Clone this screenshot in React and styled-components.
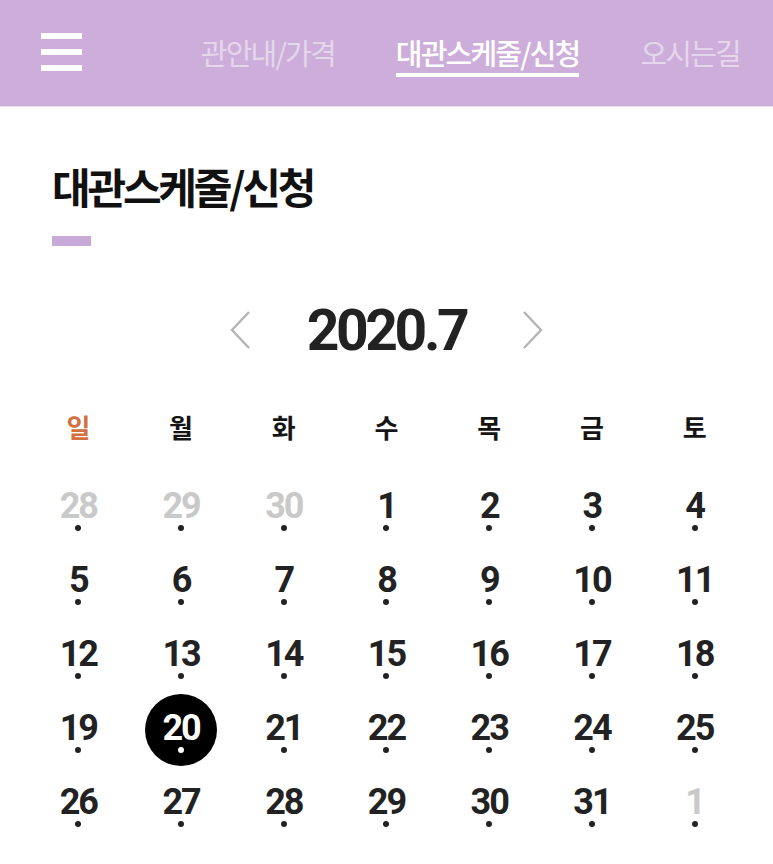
import styled, { createGlobalStyle } from "styled-components";

const GlobalStyle = createGlobalStyle`
  body {
    margin: 0;
    background: #ffffff;
    font-family: "Noto Sans CJK KR", "Noto Sans", sans-serif;
  }
`;

const weekdays = ["일", "월", "화", "수", "목", "금", "토"];

const weeks = [
  [28, 29, 30, 1, 2, 3, 4],
  [5, 6, 7, 8, 9, 10, 11],
  [12, 13, 14, 15, 16, 17, 18],
  [19, 20, 21, 22, 23, 24, 25],
  [26, 27, 28, 29, 30, 31, 1],
];

function isOtherMonth(week, day) {
  return (week === 0 && day > 20) || (week === 4 && day < 10);
}

function App() {
  return (
    <Page>
      <GlobalStyle />
      <Header>
        <Hamburger aria-label="menu">
          <Bar />
          <Bar />
          <Bar />
        </Hamburger>
        <Nav>
          <NavItem>관안내/가격</NavItem>
          <NavItem $active>대관스케줄/신청</NavItem>
          <NavItem>오시는길</NavItem>
        </Nav>
      </Header>

      <Content>
        <Title>대관스케줄/신청</Title>
        <TitleMark />

        <MonthBar>
          <Arrow aria-label="previous">
            <svg width="22" height="40" viewBox="0 0 22 40">
              <polyline points="20,2 3,20 20,38" fill="none" stroke="#b4b4b4" strokeWidth="2.4" />
            </svg>
          </Arrow>
          <MonthLabel>2020.7</MonthLabel>
          <Arrow aria-label="next">
            <svg width="22" height="40" viewBox="0 0 22 40">
              <polyline points="2,2 19,20 2,38" fill="none" stroke="#b4b4b4" strokeWidth="2.4" />
            </svg>
          </Arrow>
        </MonthBar>

        <Grid>
          {weekdays.map((w, i) => (
            <Weekday key={w} $sunday={i === 0}>
              {w}
            </Weekday>
          ))}
          {weeks.map((week, wi) =>
            week.map((day, di) => {
              const selected = wi === 3 && day === 20;
              return (
                <Cell key={`${wi}-${di}`}>
                  <Day $muted={isOtherMonth(wi, day)} $selected={selected}>
                    <DayNum>{day}</DayNum>
                    <Dot $selected={selected} />
                  </Day>
                </Cell>
              );
            })
          )}
        </Grid>
      </Content>
    </Page>
  );
}

const Page = styled.div`
  width: 773px;
  min-height: 864px;
  background: #ffffff;
`;

const Header = styled.header`
  height: 107px;
  background: #cdaeda;
  display: flex;
  align-items: center;
  padding: 0 33px 0 41px;
  box-sizing: border-box;
  border-bottom: 1px solid #e6dcea;
`;

const Hamburger = styled.div`
  width: 41px;
  display: flex;
  flex-direction: column;
  gap: 10px;
  margin-top: -2px;
`;

const Bar = styled.span`
  display: block;
  height: 6px;
  background: #ffffff;
`;

const Nav = styled.nav`
  flex: 1;
  display: flex;
  justify-content: flex-end;
  gap: 61px;
`;

const NavItem = styled.span`
  position: relative;
  font-size: 29px;
  letter-spacing: -1.8px;
  line-height: 1;
  padding-bottom: 2px;
  color: ${(p) => (p.$active ? "#ffffff" : "rgba(255, 255, 255, 0.5)")};
  font-weight: ${(p) => (p.$active ? 500 : 400)};

  &::after {
    content: "";
    display: ${(p) => (p.$active ? "block" : "none")};
    position: absolute;
    left: 0;
    right: 0;
    bottom: -8px;
    height: 4px;
    background: #ffffff;
  }
`;

const Content = styled.main`
  padding: 56px 27px 0;
`;

const Title = styled.h1`
  margin: 0 0 0 25px;
  font-size: 42px;
  font-weight: 700;
  letter-spacing: -3.2px;
  color: #111111;
  line-height: 46px;
`;

const TitleMark = styled.div`
  width: 39px;
  height: 10px;
  background: #c8a9d8;
  margin: 27px 0 0 25px;
`;

const MonthBar = styled.div`
  display: flex;
  justify-content: center;
  align-items: center;
  gap: 56px;
  margin-top: 54px;
`;

const Arrow = styled.button`
  border: 0;
  background: none;
  padding: 0;
  display: flex;
  cursor: pointer;
`;

const MonthLabel = styled.div`
  font-family: "Roboto", sans-serif;
  font-weight: 700;
  font-size: 57px;
  letter-spacing: -3.4px;
  color: #222222;
  line-height: 1;
  margin-top: 2px;
`;

const Grid = styled.div`
  display: grid;
  grid-template-columns: repeat(7, 1fr);
  grid-template-rows: 70px;
  grid-auto-rows: 74px;
  margin-top: 42px;
`;

const Weekday = styled.div`
  display: flex;
  justify-content: center;
  align-items: center;
  padding-bottom: 19px;
  font-size: 26px;
  font-weight: 700;
  color: ${(p) => (p.$sunday ? "#d4703f" : "#151515")};
`;

const Cell = styled.div`
  display: flex;
  justify-content: center;
  align-items: center;
`;

const Day = styled.div`
  width: 72px;
  height: 72px;
  border-radius: 50%;
  display: flex;
  flex-direction: column;
  align-items: center;
  justify-content: center;
  background: ${(p) => (p.$selected ? "#000000" : "transparent")};
  color: ${(p) => (p.$selected ? "#ffffff" : p.$muted ? "#c9c9c9" : "#222222")};
`;

const DayNum = styled.span`
  font-family: "Roboto", sans-serif;
  font-weight: 700;
  font-size: 36px;
  letter-spacing: -2px;
  line-height: 1;
  margin-top: 2px;
`;

const Dot = styled.span`
  width: 6px;
  height: 6px;
  border-radius: 50%;
  margin-top: 1px;
  background: ${(p) => (p.$selected ? "#ffffff" : "#222222")};
`;

export default App;
